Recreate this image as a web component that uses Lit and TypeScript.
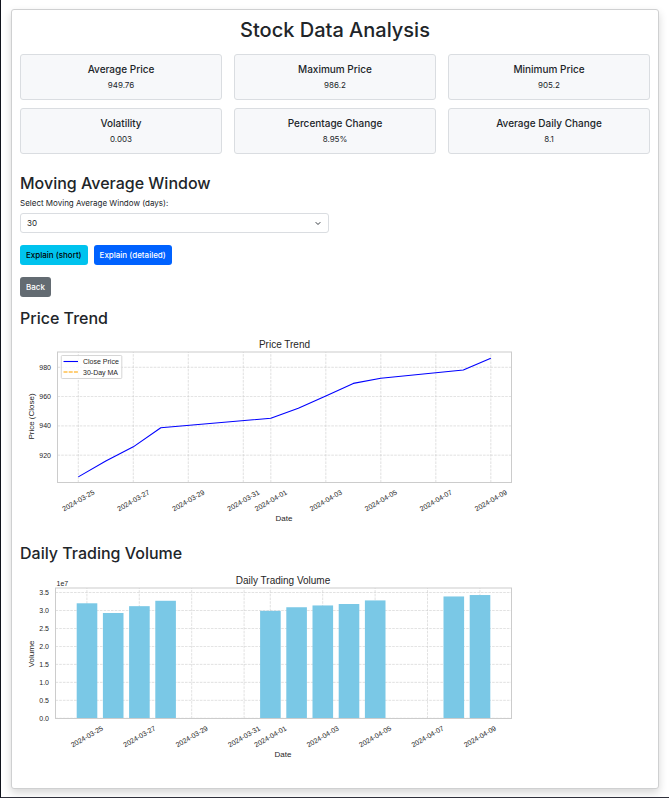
import { LitElement, html, svg, css } from "lit";
import { customElement, property, state } from "lit/decorators.js";

interface Tick { label: string; pos: number }

const DATE_TICKS: Array<[string, number]> = [
  ["2024-03-25", 0], ["2024-03-27", 2], ["2024-03-29", 4], ["2024-03-31", 6],
  ["2024-04-01", 7], ["2024-04-03", 9], ["2024-04-05", 11], ["2024-04-07", 13],
  ["2024-04-09", 15],
];

// [days since 2024-03-25, closing price]
const PRICES: Array<[number, number]> = [
  [0, 905.2], [1, 916], [2, 925.7], [3, 938.7], [7, 945.2], [8, 952],
  [9, 960.4], [10, 969], [11, 972.5], [14, 978.2], [15, 986.2],
];

// [days since 2024-03-25, shares traded in units of 1e7]
const VOLUMES: Array<[number, number]> = [
  [0, 3.2], [1, 2.93], [2, 3.12], [3, 3.27], [7, 2.99], [8, 3.09],
  [9, 3.14], [10, 3.18], [11, 3.28], [14, 3.39], [15, 3.43],
];

const STATS: Array<[string, string]> = [
  ["Average Price", "949.76"], ["Maximum Price", "986.2"], ["Minimum Price", "905.2"],
  ["Volatility", "0.003"], ["Percentage Change", "8.95%"], ["Average Daily Change", "8.1"],
];

const chartStyles = css`
  :host { display: block; }
  svg { display: block; width: 500px; max-width: 100%; height: auto; font-family: "Liberation Sans", Arial, sans-serif; fill: #262626; }
  .grid { stroke: #cccccc; stroke-width: 0.8; stroke-dasharray: 2.6 1.1; opacity: 0.7; }
  .frame { fill: none; stroke: #cccccc; stroke-width: 1; }
  .tick { font-size: 7px; }
  .axis { font-size: 8px; }
  .title { font-size: 10px; }
  .middle { text-anchor: middle; }
  .end { text-anchor: end; }
  .line { fill: none; stroke: #0000ff; stroke-width: 1.1; stroke-linejoin: round; }
  .average { stroke: #ffa500; stroke-width: 1.5; stroke-dasharray: 4 1.2; opacity: 0.7; }
  .legend { fill: #ffffff; fill-opacity: 0.8; stroke: #cccccc; stroke-width: 0.8; }
  .bar { fill: #7ac8e6; }
`;

const dateLabel = (x: number, y: number, text: string) =>
  svg`<text class="tick middle" transform="translate(${x} ${y}) rotate(-30)" y="2.5">${text}</text>`;

@customElement("price-chart")
class PriceChart extends LitElement {
  static styles = chartStyles;

  @property({ type: Number }) days = 30;

  render() {
    const x = (d: number) => 58.3 + d * 27.5;
    const y = (v: number) => 31.3 + (980 - v) * 1.465;
    const rows: Tick[] = [980, 960, 940, 920].map((v) => ({ label: String(v), pos: y(v) }));
    return html`<svg viewBox="0 0 500 190" role="img" aria-label="Price trend">
      ${DATE_TICKS.map(([, d]) => svg`<line class="grid" x1=${x(d)} x2=${x(d)} y1="146.5" y2="16"/>`)}
      ${rows.map((r) => svg`<line class="grid" x1="37.5" x2="491.3" y1=${r.pos} y2=${r.pos}/>`)}
      <polyline class="line" points=${PRICES.map(([d, v]) => `${x(d)},${y(v)}`).join(" ")} />
      <rect class="frame" x="37.5" y="16" width="454" height="130.5" />
      <rect class="legend" x="41.3" y="19.5" width="60.5" height="23" rx="1" />
      <line class="line" x1="43.5" x2="58" y1="25.5" y2="25.5" />
      <line class="average" x1="43.5" x2="58" y1="36" y2="36" />
      <text class="tick" x="63" y="28">Close Price</text>
      <text class="tick" x="63" y="38.5">${this.days}-Day MA</text>
      ${rows.map((r) => svg`<text class="tick end" x="31" y=${r.pos + 2.5}>${r.label}</text>`)}
      ${DATE_TICKS.map(([t, d]) => dateLabel(x(d), 164.5, t))}
      <text class="axis middle" transform="translate(14 80.5) rotate(-90)">Price (Close)</text>
      <text class="axis middle" x="264" y="185">Date</text>
      <text class="title middle" x="264.5" y="12">Price Trend</text>
    </svg>`;
  }
}

@customElement("volume-chart")
class VolumeChart extends LitElement {
  static styles = chartStyles;

  render() {
    const x = (d: number) => 66.9 + d * 26.2;
    const y = (v: number) => 146.3 - v * 35.94;
    const rows: Tick[] = [0, 0.5, 1, 1.5, 2, 2.5, 3, 3.5].map((v) => ({ label: v.toFixed(1), pos: y(v) }));
    return html`<svg viewBox="0 0 500 190" role="img" aria-label="Daily trading volume">
      ${DATE_TICKS.map(([, d]) => svg`<line class="grid" x1=${x(d)} x2=${x(d)} y1="146.5" y2="16"/>`)}
      ${rows.map((r) => svg`<line class="grid" x1="35.5" x2="491.3" y1=${r.pos} y2=${r.pos}/>`)}
      ${VOLUMES.map(([d, v]) => svg`<rect class="bar" x=${x(d) - 10.2} y=${y(v)} width="20.6" height=${v * 35.94}/>`)}
      <rect class="frame" x="35.5" y="16" width="456" height="130.5" />
      ${rows.map((r) => svg`<text class="tick end" x="29" y=${r.pos + 2.5}>${r.label}</text>`)}
      ${DATE_TICKS.map(([t, d]) => dateLabel(x(d), 164.5, t))}
      <text class="tick" x="36.5" y="14">1e7</text>
      <text class="axis middle" transform="translate(14 82) rotate(-90)">Volume</text>
      <text class="axis middle" x="263" y="185">Date</text>
      <text class="title middle" x="263" y="12">Daily Trading Volume</text>
    </svg>`;
  }
}

@customElement("app-root")
class AppRoot extends LitElement {
  @state() private days = 30;

  static styles = css`
    :host {
      display: block;
      box-sizing: border-box;
      min-height: 100vh;
      padding: 9px 10px 8px;
      border-left: 1px solid #10131c;
      border-bottom: 1px solid #30313c;
      background: #ffffff;
      color: #212529;
      font-family: Inter, "Liberation Sans", sans-serif;
      font-size: 8px;
      line-height: 12px;
    }
    * { box-sizing: border-box; }
    .card { padding: 8px 8px 26px; border: 1px solid #cfd0d1; border-radius: 3px; background: #ffffff; box-shadow: 0 4px 9px rgba(0, 0, 0, 0.16); }
    h1, h2, h3, p { margin: 0; font-weight: 500; }
    h1 { margin-bottom: 12px; font-size: 20px; line-height: 24px; text-align: center; }
    h2 { font-size: 16px; line-height: 20px; }
    .stats { display: grid; grid-template-columns: repeat(3, 1fr); gap: 8px 12px; margin-bottom: 19px; }
    .stat { padding: 8px; border: 1px solid #dadde1; border-radius: 3px; background: #f7f8fa; text-align: center; }
    .stat h3 { margin-bottom: 4px; font-size: 10px; line-height: 12px; }
    .stat p { font-weight: 400; line-height: 12px; }
    label { display: block; margin: 4px 0; }
    .picker { position: relative; width: 49%; }
    select { display: block; width: 100%; height: 20px; padding: 0 6px; appearance: none; border: 1px solid #dadde1; border-radius: 3px; background: #ffffff; color: #212529; font: inherit; }
    .chevron { position: absolute; right: 8px; top: 8px; width: 6px; height: 5px; pointer-events: none; fill: none; stroke: #343a40; }
    .actions { display: flex; gap: 6px; margin: 12px 0; }
    button { height: 20px; padding: 0 6px; border: 0; border-radius: 3px; color: #ffffff; font: inherit; font-weight: 500; }
    .info { background: #00c3ee; color: #000000; }
    .primary { background: #0062ff; }
    .secondary { background: #636b72; }
    .trend { margin: 11px 0 8px; }
    .volume { margin: 17px 0 9px; }
  `;

  private pick(e: Event) {
    this.days = Number((e.target as HTMLSelectElement).value);
  }

  render() {
    return html`<main class="card">
      <h1>Stock Data Analysis</h1>
      <section class="stats">
        ${STATS.map(([name, value]) => html`<div class="stat"><h3>${name}</h3><p>${value}</p></div>`)}
      </section>
      <h2>Moving Average Window</h2>
      <label for="window">Select Moving Average Window (days):</label>
      <div class="picker">
        <select id="window" @change=${this.pick}>
          ${[30, 60, 90].map((d) => html`<option value=${d} ?selected=${d === this.days}>${d}</option>`)}
        </select>
        <svg class="chevron" viewBox="0 0 6 5"><path d="M.7 1.2 3 3.5 5.3 1.2" /></svg>
      </div>
      <div class="actions">
        <button class="info">Explain (short)</button>
        <button class="primary">Explain (detailed)</button>
      </div>
      <button class="secondary">Back</button>
      <h2 class="trend">Price Trend</h2>
      <price-chart .days=${this.days}></price-chart>
      <h2 class="volume">Daily Trading Volume</h2>
      <volume-chart></volume-chart>
    </main>`;
  }
}
